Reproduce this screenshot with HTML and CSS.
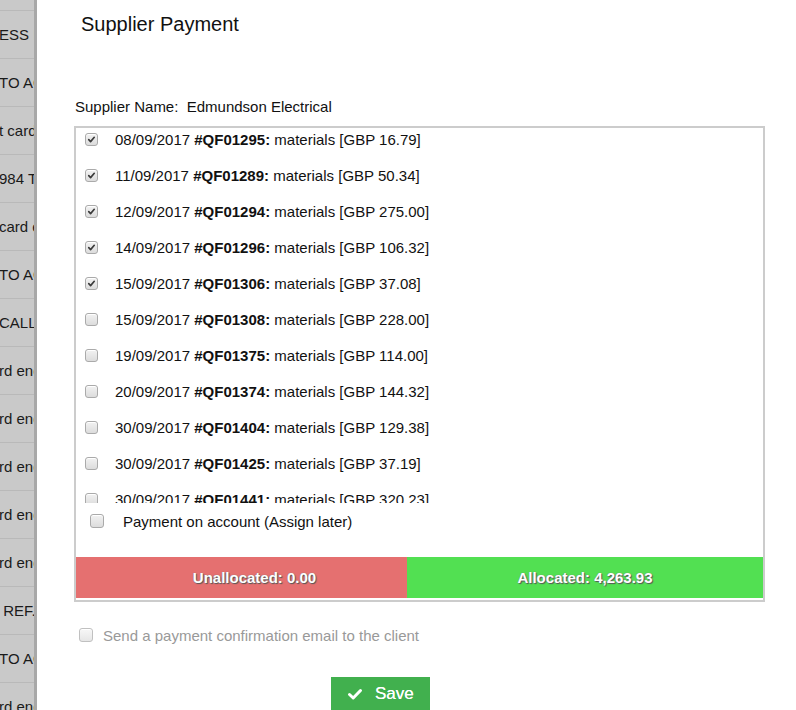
FILE: index.html
```html
<!DOCTYPE html>
<html>
<head>
<meta charset="utf-8">
<link rel="stylesheet" href="styles.css">
</head>
<body>
<div class="page">
  <aside class="sidebar">
    <div class="srow"><span>ESS PA</span></div>
    <div class="srow"><span>TO AC</span></div>
    <div class="srow"><span>t card</span></div>
    <div class="srow"><span>984 Ty</span></div>
    <div class="srow"><span>card e</span></div>
    <div class="srow"><span>TO AC</span></div>
    <div class="srow"><span>CALL R</span></div>
    <div class="srow"><span>rd end</span></div>
    <div class="srow"><span>rd end</span></div>
    <div class="srow"><span>rd end</span></div>
    <div class="srow"><span>rd end</span></div>
    <div class="srow"><span>rd end</span></div>
    <div class="srow"><span>&nbsp;REF.</span></div>
    <div class="srow"><span>TO AC</span></div>
    <div class="srow"><span>rd end</span></div>
  </aside>
  <main class="main">
    <h1 class="title">Supplier Payment</h1>
    <div class="supplier">Supplier Name:&nbsp; Edmundson Electrical</div>
    <div class="box">
      <div class="list">
        <div class="item"><span class="cb checked"><svg viewBox="0 0 12 12"><path d="M3 6.2 L5 8.3 L9 3.6" /></svg></span><span class="itext">08/09/2017 <b>#QF01295:</b> materials [GBP 16.79]</span></div>
        <div class="item"><span class="cb checked"><svg viewBox="0 0 12 12"><path d="M3 6.2 L5 8.3 L9 3.6" /></svg></span><span class="itext">11/09/2017 <b>#QF01289:</b> materials [GBP 50.34]</span></div>
        <div class="item"><span class="cb checked"><svg viewBox="0 0 12 12"><path d="M3 6.2 L5 8.3 L9 3.6" /></svg></span><span class="itext">12/09/2017 <b>#QF01294:</b> materials [GBP 275.00]</span></div>
        <div class="item"><span class="cb checked"><svg viewBox="0 0 12 12"><path d="M3 6.2 L5 8.3 L9 3.6" /></svg></span><span class="itext">14/09/2017 <b>#QF01296:</b> materials [GBP 106.32]</span></div>
        <div class="item"><span class="cb checked"><svg viewBox="0 0 12 12"><path d="M3 6.2 L5 8.3 L9 3.6" /></svg></span><span class="itext">15/09/2017 <b>#QF01306:</b> materials [GBP 37.08]</span></div>
        <div class="item"><span class="cb"></span><span class="itext">15/09/2017 <b>#QF01308:</b> materials [GBP 228.00]</span></div>
        <div class="item"><span class="cb"></span><span class="itext">19/09/2017 <b>#QF01375:</b> materials [GBP 114.00]</span></div>
        <div class="item"><span class="cb"></span><span class="itext">20/09/2017 <b>#QF01374:</b> materials [GBP 144.32]</span></div>
        <div class="item"><span class="cb"></span><span class="itext">30/09/2017 <b>#QF01404:</b> materials [GBP 129.38]</span></div>
        <div class="item"><span class="cb"></span><span class="itext">30/09/2017 <b>#QF01425:</b> materials [GBP 37.19]</span></div>
        <div class="item"><span class="cb"></span><span class="itext">30/09/2017 <b>#QF01441:</b> materials [GBP 320.23]</span></div>
      </div>
      <div class="account"><span class="cb big"></span><span>Payment on account (Assign later)</span></div>
      <div class="bar">
        <div class="unalloc">Unallocated: 0.00</div>
        <div class="alloc">Allocated: 4,263.93</div>
      </div>
    </div>
    <div class="email"><span class="cb big light"></span><span>Send a payment confirmation email to the client</span></div>
    <div class="actions">
      <button class="save"><svg class="tick" viewBox="0 0 16 16"><path d="M2.5 8.5 L6.2 12 L13.5 4.5" /></svg><span>Save</span></button>
    </div>
  </main>
</div>
</body>
</html>
```
FILE: styles.css
```css
* { box-sizing: border-box; }
html, body { margin: 0; padding: 0; }
body {
  font-family: "Liberation Sans", Arial, Helvetica, sans-serif;
  color: #111;
  background: #fff;
  width: 796px;
  height: 710px;
  overflow: hidden;
}
.page {
  display: flex;
  height: 710px;
}
.sidebar {
  width: 37px;
  flex: 0 0 37px;
  background: #c9c9c9;
  border-right: 3px solid #a8a8a8;
  padding-top: 10px;
  overflow: hidden;
}
.srow {
  height: 48px;
  border-top: 1px solid #b9b9b9;
  display: flex;
  align-items: center;
  white-space: nowrap;
  overflow: hidden;
  font-size: 15px;
  color: #1a1a1a;
}
.srow span { margin-left: -1px; }
.main {
  flex: 1;
  padding-left: 37px;
  padding-right: 31px;
}
.title {
  margin: 0;
  padding: 12px 0 0 7px;
  font-size: 20px;
  line-height: 24px;
  font-weight: normal;
  color: #111;
}
.supplier {
  margin-top: 62px;
  font-size: 15px;
  line-height: 18px;
  padding-left: 1px;
}
.box {
  margin-top: 10px;
  border: 2px solid #cccccc;
  padding-bottom: 2px;
}
.list {
  height: 375px;
  overflow: hidden;
  padding-top: 1px;
}
.item {
  display: flex;
  align-items: center;
  height: 20px;
  margin-bottom: 16px;
  font-size: 15px;
  padding-left: 9px;
}
.itext { margin-left: 17px; }
.itext b { font-weight: bold; }
.cb {
  display: inline-flex;
  align-items: center;
  justify-content: center;
  width: 13px;
  height: 13px;
  flex: 0 0 13px;
  border: 1px solid #aaaaaa;
  border-radius: 3px;
  background: linear-gradient(#f2f2f2, #dcdcdc);
  box-shadow: inset 0 1px 0 #ffffff;
}
.cb svg { width: 11px; height: 11px; }
.cb svg path {
  fill: none;
  stroke: #3a3a3a;
  stroke-width: 1.8;
  stroke-linecap: round;
  stroke-linejoin: round;
}
.cb.big { width: 14px; height: 14px; flex-basis: 14px; }
.cb.light { border-color: #c0c0c0; background: linear-gradient(#f7f7f7, #e6e6e6); }
.account {
  display: flex;
  align-items: center;
  height: 20px;
  margin-top: 8px;
  padding-left: 14px;
  font-size: 15px;
}
.account span:last-child { margin-left: 19px; }
.bar {
  display: flex;
  margin-top: 26px;
  height: 41px;
  color: #fff;
  font-weight: bold;
  font-size: 15px;
  text-shadow: 1px 1px 1px #555, 0 0 1px #777;
}
.unalloc {
  width: 331px;
  background: #e57070;
  display: flex;
  align-items: center;
  justify-content: center;
  padding-left: 26px;
}
.alloc {
  flex: 1;
  background: #52e052;
  display: flex;
  align-items: center;
  justify-content: center;
}
.email {
  display: flex;
  align-items: center;
  margin-top: 23px;
  padding-left: 5px;
  font-size: 15px;
  color: #999999;
  height: 20px;
}
.email span:last-child { margin-left: 10px; }
.actions {
  display: flex;
  margin-top: 32px;
  padding-left: 257px;
}
.save {
  display: flex;
  align-items: center;
  width: 99px;
  height: 34px;
  border: none;
  border-radius: 0;
  background: #41b04e;
  color: #fff;
  font-family: "Liberation Sans", Arial, sans-serif;
  font-size: 17px;
  padding: 0 0 0 16px;
}
.tick { width: 16px; height: 16px; }
.tick path {
  fill: none;
  stroke: #fff;
  stroke-width: 3;
  stroke-linecap: round;
  stroke-linejoin: round;
}
.save span { margin-left: 12px; font-weight: normal; text-shadow: 0 0 0.6px #fff; }
```
